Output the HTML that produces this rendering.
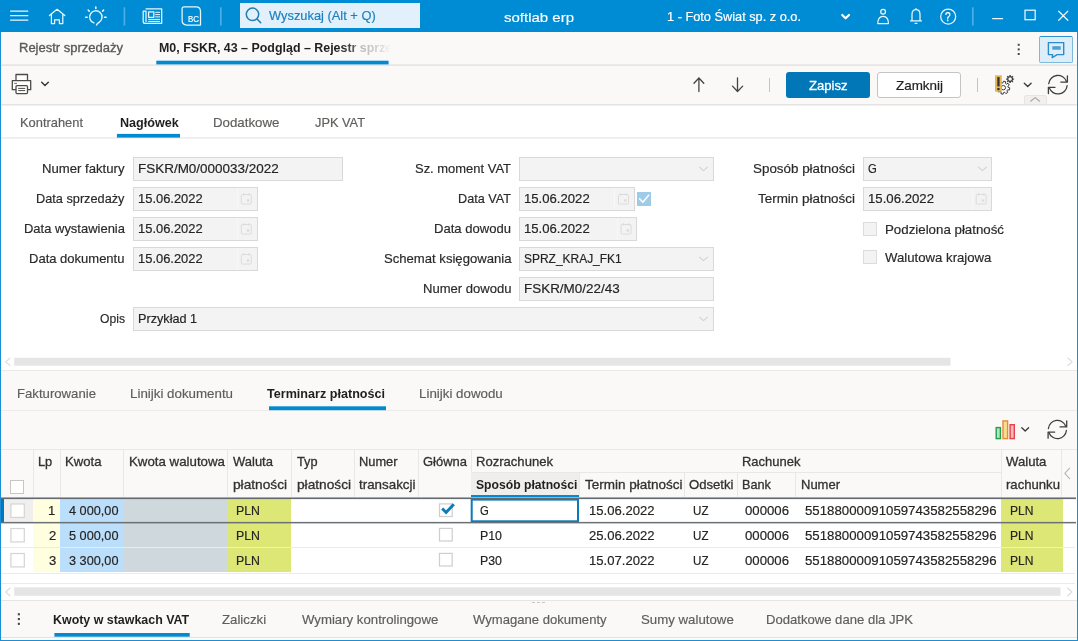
<!doctype html>
<html lang="pl"><head><meta charset="utf-8"><title>softlab erp – M0, FSKR, 43 – Podgląd – Rejestr sprzedaży</title>
<style>
html,body{margin:0;padding:0}
body{width:1078px;height:641px;overflow:hidden;position:relative;background:#faf9f8;font-family:"Liberation Sans", Arial, sans-serif;font-size:13px;color:#2b2a29}
#app div{position:absolute}
#app{position:absolute;left:0;top:0;width:1078px;height:641px;overflow:hidden}
.t{position:absolute;white-space:pre;line-height:1;transform-origin:0 0;display:block}
.clip{position:absolute;overflow:hidden;top:0;height:641px}
svg.ico{position:absolute;left:0;top:0;pointer-events:none}
</style></head><body><div id="app">
<div class="topbar" style="left:0px;top:0px;width:1078px;height:32px;background:#008cd4;"></div>
<div class="tabrow" style="left:0px;top:32px;width:1078px;height:32px;background:#faf9f8;"></div>
<div class="toolbar" style="left:0px;top:65px;width:1078px;height:39px;background:#faf9f8;"></div>
<div class="form" style="left:0px;top:105px;width:1078px;height:265px;background:#ffffff;"></div>
<div style="left:0px;top:370px;width:1078px;height:1px;background:#eae9e8;"></div>
<div class="tabrow2" style="left:0px;top:371px;width:1078px;height:39px;background:#faf9f8;"></div>
<div style="left:0px;top:410px;width:1078px;height:1px;background:#edecea;"></div>
<div class="gridbar" style="left:0px;top:411px;width:1078px;height:38px;background:#faf9f8;"></div>
<div style="left:0px;top:449px;width:1078px;height:1px;background:#e9e8e7;"></div>
<div class="gridhead" style="left:0px;top:450px;width:1078px;height:48px;background:#faf9f8;"></div>
<div class="gridbody" style="left:0px;top:498px;width:1078px;height:102px;background:#ffffff;"></div>
<div style="left:0px;top:600px;width:1078px;height:1px;background:#e6e5e4;"></div>
<div class="bottomtabs" style="left:0px;top:601px;width:1078px;height:36px;background:#faf9f8;"></div>
<div style="left:0px;top:637px;width:1078px;height:1px;background:#e2e1e0;"></div>
<div style="left:0px;top:638px;width:1078px;height:2px;background:#fdfdfc;"></div>
<div class="search" style="left:240px;top:3px;width:179.5px;height:25px;background:#e1f0fa;"></div>
<div class="chatbtn" style="left:1039px;top:36px;width:33.6px;height:27px;background:#deeef9;box-sizing:border-box;border:1px solid #7db9de;border-top-color:#2b8fcf;border-radius:2px;"></div>
<div class="btn-primary" style="left:786px;top:72px;width:84px;height:26px;background:#0277b8;border-radius:3px;"></div>
<div class="btn" style="left:877px;top:72px;width:84px;height:26px;background:#ffffff;box-sizing:border-box;border:1px solid #c6c4c2;border-radius:3px;"></div>
<div style="left:769px;top:78px;width:1px;height:13.5px;background:#c4c2c0;"></div>
<div style="left:977px;top:78px;width:1px;height:13.5px;background:#c4c2c0;"></div>
<div style="left:1024px;top:95px;width:23px;height:9.5px;background:#f1f0ef;box-sizing:border-box;border:1px solid #e6e5e4;border-bottom:none;border-radius:3px 3px 0 0;"></div>
<div class="field" style="left:133px;top:157px;width:210px;height:24px;background:#f3f3f3;box-sizing:border-box;border:1px solid #d9d9d9;"></div>
<div class="field" style="left:133px;top:187px;width:124.5px;height:24px;background:#f3f3f3;box-sizing:border-box;border:1px solid #d9d9d9;"></div>
<div class="field" style="left:133px;top:217px;width:124.5px;height:24px;background:#f3f3f3;box-sizing:border-box;border:1px solid #d9d9d9;"></div>
<div class="field" style="left:133px;top:247px;width:124.5px;height:24px;background:#f3f3f3;box-sizing:border-box;border:1px solid #d9d9d9;"></div>
<div class="field" style="left:133px;top:307px;width:581px;height:24px;background:#f3f3f3;box-sizing:border-box;border:1px solid #d9d9d9;"></div>
<div class="field" style="left:519px;top:157px;width:195px;height:24px;background:#f3f3f3;box-sizing:border-box;border:1px solid #d9d9d9;"></div>
<div class="field" style="left:519px;top:187px;width:115.5px;height:24px;background:#f3f3f3;box-sizing:border-box;border:1px solid #d9d9d9;"></div>
<div class="field" style="left:519px;top:217px;width:118px;height:24px;background:#f3f3f3;box-sizing:border-box;border:1px solid #d9d9d9;"></div>
<div class="field" style="left:519px;top:247px;width:195px;height:24px;background:#f3f3f3;box-sizing:border-box;border:1px solid #d9d9d9;"></div>
<div class="field" style="left:519px;top:277px;width:195px;height:24px;background:#f3f3f3;box-sizing:border-box;border:1px solid #d9d9d9;"></div>
<div class="chk-on" style="left:637px;top:192px;width:14px;height:14px;background:#9dcbe8;"></div>
<div class="field" style="left:863px;top:157px;width:129px;height:24px;background:#f3f3f3;box-sizing:border-box;border:1px solid #d9d9d9;"></div>
<div class="field" style="left:863px;top:187px;width:129px;height:24px;background:#f3f3f3;box-sizing:border-box;border:1px solid #d9d9d9;"></div>
<div class="chk" style="left:863px;top:222px;width:14px;height:14px;background:#f3f3f3;box-sizing:border-box;border:1px solid #dcdcdc;"></div>
<div class="chk" style="left:863px;top:250px;width:14px;height:14px;background:#f3f3f3;box-sizing:border-box;border:1px solid #dcdcdc;"></div>
<div style="left:237px;top:188px;width:1px;height:22px;background:#f8f8f8;"></div>
<div style="left:237px;top:218px;width:1px;height:22px;background:#f8f8f8;"></div>
<div style="left:237px;top:248px;width:1px;height:22px;background:#f8f8f8;"></div>
<div style="left:614.2px;top:188px;width:1px;height:22px;background:#f8f8f8;"></div>
<div style="left:616.7px;top:218px;width:1px;height:22px;background:#f8f8f8;"></div>
<div style="left:972px;top:188px;width:1px;height:22px;background:#f8f8f8;"></div>
<div style="left:33px;top:450px;width:1px;height:47px;background:#e9e8e7;"></div>
<div style="left:59.5px;top:450px;width:1px;height:47px;background:#e9e8e7;"></div>
<div style="left:122.5px;top:450px;width:1px;height:47px;background:#e9e8e7;"></div>
<div style="left:227px;top:450px;width:1px;height:47px;background:#e9e8e7;"></div>
<div style="left:291px;top:450px;width:1px;height:47px;background:#e9e8e7;"></div>
<div style="left:353.5px;top:450px;width:1px;height:47px;background:#e9e8e7;"></div>
<div style="left:418px;top:450px;width:1px;height:47px;background:#e9e8e7;"></div>
<div style="left:470.5px;top:450px;width:1px;height:47px;background:#e9e8e7;"></div>
<div style="left:1000.5px;top:450px;width:1px;height:47px;background:#e9e8e7;"></div>
<div style="left:1060.5px;top:450px;width:1px;height:47px;background:#e9e8e7;"></div>
<div style="left:579px;top:473px;width:1px;height:24px;background:#e9e8e7;"></div>
<div style="left:683.5px;top:473px;width:1px;height:24px;background:#e9e8e7;"></div>
<div style="left:736.5px;top:473px;width:1px;height:24px;background:#e9e8e7;"></div>
<div style="left:795px;top:473px;width:1px;height:24px;background:#e9e8e7;"></div>
<div style="left:471px;top:472px;width:529.5px;height:1px;background:#e9e8e7;"></div>
<div style="left:471px;top:473px;width:108px;height:24px;background:#efeeed;"></div>
<div style="left:471px;top:494.5px;width:108px;height:2.5px;background:#008cd4;"></div>
<div class="chk" style="left:10px;top:480px;width:14px;height:14px;background:#ffffff;box-sizing:border-box;border:1px solid #c8c6c4;"></div>
<div style="left:4px;top:499px;width:29px;height:23px;background:#f0efee;"></div>
<div style="left:33px;top:499px;width:26.5px;height:23px;background:#ffffe0;"></div>
<div style="left:59.5px;top:499px;width:63px;height:23px;background:#bbdefb;"></div>
<div style="left:122.5px;top:499px;width:104.5px;height:23px;background:#cfd8dc;"></div>
<div style="left:227px;top:499px;width:63.5px;height:23px;background:#dce775;"></div>
<div style="left:1001px;top:499px;width:61.5px;height:23px;background:#dce775;"></div>
<div style="left:33px;top:523px;width:26.5px;height:24px;background:#ffffe0;"></div>
<div style="left:59.5px;top:523px;width:63px;height:24px;background:#bbdefb;"></div>
<div style="left:122.5px;top:523px;width:104.5px;height:24px;background:#cfd8dc;"></div>
<div style="left:227px;top:523px;width:63.5px;height:24px;background:#dce775;"></div>
<div style="left:1001px;top:523px;width:61.5px;height:24px;background:#dce775;"></div>
<div style="left:33px;top:548px;width:26.5px;height:24px;background:#ffffe0;"></div>
<div style="left:59.5px;top:548px;width:63px;height:24px;background:#bbdefb;"></div>
<div style="left:122.5px;top:548px;width:104.5px;height:24px;background:#cfd8dc;"></div>
<div style="left:227px;top:548px;width:63.5px;height:24px;background:#dce775;"></div>
<div style="left:1001px;top:548px;width:61.5px;height:24px;background:#dce775;"></div>
<div style="left:1px;top:547px;width:1074px;height:1px;background:#ecebea;"></div>
<div style="left:1px;top:573px;width:1074px;height:1px;background:#ecebea;"></div>
<div style="left:1px;top:583px;width:1074px;height:1px;background:#ecebea;"></div>
<div style="left:1px;top:499px;width:3px;height:23px;background:#0277bd;"></div>
<div style="left:532px;top:602px;width:3.4px;height:1px;background:#c9c8c7;"></div>
<div style="left:537px;top:602px;width:3.4px;height:1px;background:#c9c8c7;"></div>
<div style="left:542px;top:602px;width:3.4px;height:1px;background:#c9c8c7;"></div>
<div style="left:0px;top:32px;width:1.2px;height:609px;background:#1b8fd6;"></div>
<div style="left:1076.7px;top:32px;width:1.3px;height:609px;background:#1b8fd6;"></div>
<div style="left:0px;top:640px;width:1078px;height:1px;background:#1b8fd6;"></div>
<svg class="ico" width="1078" height="641" viewBox="0 0 1078 641"><rect x="1.2" y="64.3" width="1075.5" height="1.6" fill="#e5e4e3"/>
<rect x="1.2" y="104" width="1075.5" height="1.6" fill="#e5e4e3"/>
<rect x="1.2" y="137.1" width="1075.5" height="1.6" fill="#eeedec"/>
<rect x="156.3" y="60.7" width="232.3" height="3.7" fill="#0289d2"/>
<rect x="116.9" y="133.9" width="63.1" height="3.7" fill="#0289d2"/>
<rect x="14.2" y="357.8" width="936.3" height="7.9" fill="#e5e5e5"/>
<rect x="269" y="406.3" width="117" height="3.9" fill="#0289d2"/>
<rect x="10.9" y="504.0" width="13.4" height="13.4" fill="#fff" stroke="#d5d4d3" stroke-width="1.2"/>
<rect x="439.5" y="503.9" width="12.7" height="12.6" fill="#fff" stroke="#cfcecd" stroke-width="1.2"/>
<rect x="10.9" y="528.5" width="13.4" height="13.4" fill="#fff" stroke="#d5d4d3" stroke-width="1.2"/>
<rect x="439.5" y="528.4" width="12.7" height="12.6" fill="#fff" stroke="#cfcecd" stroke-width="1.2"/>
<rect x="10.9" y="553.5" width="13.4" height="13.4" fill="#fff" stroke="#d5d4d3" stroke-width="1.2"/>
<rect x="439.5" y="553.4" width="12.7" height="12.6" fill="#fff" stroke="#cfcecd" stroke-width="1.2"/>
<rect x="471.7" y="499.6" width="106.3" height="21.7" fill="none" stroke="#0b7bb9" stroke-width="2"/>
<rect x="1" y="497.1" width="1075" height="0.9" fill="#a8aaab"/><rect x="1" y="497.9" width="1075" height="1.2" fill="#646b70"/><rect x="1" y="521.9" width="1075" height="1.5" fill="#6b7074"/>
<rect x="14.2" y="587.4" width="1046.3" height="8.4" fill="#e5e5e5"/>
<rect x="54.4" y="633" width="135.3" height="3.7" fill="#0289d2"/>
<g stroke="#fff" fill="none" stroke-linecap="round" stroke-linejoin="round" stroke-width="1.25" opacity=".92"><path d="M10.6 11.2H27.8M10.6 15.7H27.8M10.6 20.2H27.8"/><path d="M49.4 15.6L57.1 9.3L64.8 15.6M51.4 14.2V23.5H54.6V19.8H59.4V23.5H62.8V14.2"/><path d="M93.9 22.9A6.2 6.2 0 1 1 99.4 22.1Q97.1 23.4 96.5 25.1" stroke-width="1.4"/><path d="M95.8 7V8.5M88.2 10L89.2 11.2M103.6 10L102.6 11.2M85.7 17.3H87.2M104.6 17.3H106.1" stroke-width="1.6"/><path d="M146 8.8H161.7V23.4H145.2Q143.2 23.4 143.2 21.4V11.2H146V21.6"/><rect x="148.6" y="11.9" width="5.2" height="5.4"/><path d="M155.6 12.3H159.6M155.6 14.6H159.6M155.6 16.9H159.6M148.6 19.4H159.6M148.6 21.4H159.6" stroke-width="1"/><path d="M184 6.9H196Q200.5 6.9 200.5 11.4V25H186.8Q182.1 25 182.1 20.3V8.8Q182.1 6.9 184 6.9Z"/><circle cx="883.1" cy="11.7" r="2.4"/><path d="M877.8 23.5Q877.8 16.3 883.1 16.3Q888.4 16.3 888.4 23.5Z"/><path d="M910.6 20.9H921.4M912 20.9V14.4Q912 9.7 916 9.7Q920 9.7 920 14.4V20.9M915.1 23.4H916.9M916 8.6V9.6"/><circle cx="948.2" cy="16.6" r="7.5"/><path d="M992.6 18.5H1002.6M1058.7 11.2L1067.8 20.3M1067.8 11.2L1058.7 20.3"/><rect x="1025" y="10.2" width="10.2" height="9.5" stroke-linejoin="miter"/></g>
<path d="M124.4 7.3V25.5M220.8 7.3V25.5M972.8 7.3V25.5" stroke="#fff" stroke-opacity=".3" stroke-width="1.7" fill="none"/>
<path d="M842.2 14.9L845.6 18.3L849 14.9" stroke="#fff" stroke-width="2.1" fill="none" stroke-linecap="round" stroke-linejoin="round"/>
<g stroke="#1f7db5" stroke-width="1.5" fill="none" stroke-linecap="round"><circle cx="252.5" cy="14.3" r="6.2"/><path d="M257.1 19L260.7 22.8"/></g>
<g fill="#4a4948"><rect x="1017.7" y="43.8" width="2" height="2"/><rect x="1017.7" y="48.4" width="2" height="2"/><rect x="1017.7" y="53" width="2" height="2"/><rect x="17.8" y="613.2" width="2.1" height="2.1"/><rect x="17.8" y="618" width="2.1" height="2.1"/><rect x="17.8" y="622.8" width="2.1" height="2.1"/></g>
<g stroke="#2b8cc9" stroke-width="1.4" fill="none" stroke-linejoin="round"><path d="M1048.4 42.6H1063.7V54.6H1057.2L1052.2 57.6L1052.6 54.6H1048.4Z"/></g><rect x="1052.3" y="46.2" width="8.4" height="3.5" fill="#4b9fd6"/>
<g stroke="#4c4b4a" stroke-width="1.3" fill="#fff" stroke-linejoin="round"><rect x="16" y="74.5" width="11.5" height="6.2"/><rect x="12.3" y="80.7" width="18.4" height="9"/><rect x="16" y="85.6" width="11.5" height="8" rx="1"/><path d="M18.2 88.4H25.2M18.2 90.6H25.2" stroke-width="1"/></g><rect x="14.2" y="82.9" width="2.8" height="1.1" fill="#2b8fd6"/>
<g stroke="#3b3a39" stroke-width="1.5" fill="none" stroke-linecap="round" stroke-linejoin="round"><path d="M41.7 82.3L45 85.5L48.3 82.3"/><path d="M1024.3 83.2L1027.7 86.4L1031.1 83.2" stroke-width="1.4"/><path d="M1021.8 427.8L1025.2 431L1028.6 427.8" stroke-width="1.35"/></g>
<g stroke="#454443" stroke-width="1.3" fill="none" stroke-linecap="round" stroke-linejoin="round"><path d="M698.9 91.6V78M694 83.3L698.9 78L703.8 83.3"/><path d="M737.5 77.8V91.5M732.5 86.1L737.5 91.5L742.7 86.1"/></g>
<g stroke="#3f3e3d" stroke-width="1" fill="none" stroke-linejoin="round"><path d="M1008.09 87.36L1009.80 87.88L1009.35 90.07L1007.58 89.87L1006.92 90.85L1007.77 92.42L1005.91 93.65L1004.79 92.26L1003.64 92.49L1003.12 94.20L1000.93 93.75L1001.13 91.98L1000.15 91.32L998.58 92.17L997.35 90.31L998.74 89.19L998.51 88.04L996.80 87.52L997.25 85.33L999.02 85.53L999.68 84.55L998.83 82.98L1000.69 81.75L1001.81 83.14L1002.96 82.91L1003.48 81.20L1005.67 81.65L1005.47 83.42L1006.45 84.08L1008.02 83.23L1009.25 85.09L1007.86 86.21Z"/><circle cx="1003.3" cy="87.7" r="2.2"/><circle cx="1010.1" cy="79.1" r="2.4" stroke-width="1.3"/><path d="M1013.10 79.10L1014.10 79.10M1012.22 81.22L1012.93 81.93M1010.10 82.10L1010.10 83.10M1007.98 81.22L1007.27 81.93M1007.10 79.10L1006.10 79.10M1007.98 76.98L1007.27 76.27M1010.10 76.10L1010.10 75.10M1012.22 76.98L1012.93 76.27" stroke-width="1.45"/></g>
<rect x="995" y="75.3" width="6.8" height="16.4" fill="#e3b758"/><rect x="997.3" y="77.1" width="2.3" height="9.3" fill="#353433"/><rect x="997.3" y="88" width="2.3" height="2.2" fill="#353433"/>
<g stroke="#3f3e3d" stroke-width="1.3" fill="none" stroke-linecap="round" stroke-linejoin="round"><path d="M1048.70 83.70A9.2 9.2 0 0 1 1066.50 81.50"/><path d="M1067.40 75.80V82.10H1060.80"/><path d="M1067.10 85.70A9.2 9.2 0 0 1 1049.30 87.90"/><path d="M1048.40 93.60V87.30H1055.00"/></g>
<g stroke="#3f3e3d" stroke-width="1.3" fill="none" stroke-linecap="round" stroke-linejoin="round"><path d="M1048.40 428.50A9.0 9.0 0 0 1 1065.80 426.30"/><path d="M1066.70 420.80V426.90H1060.10"/><path d="M1066.40 430.50A9.0 9.0 0 0 1 1049.00 432.70"/><path d="M1048.10 438.20V432.10H1054.70"/></g>
<path d="M1030.6 101.2L1035.1 97.6L1039.6 101.2" stroke="#a9a8a7" stroke-width="1.2" fill="none" stroke-linecap="round" stroke-linejoin="round"/>
<g stroke="#dcdcdc" stroke-width="1" fill="none"><rect x="241.3" y="194.5" width="10" height="9.5" rx="1"/><path d="M243.60000000000002 193V195.6M249.0 193V195.6"/></g><rect x="246.9" y="199.3" width="2.4" height="2.4" fill="#dcdcdc"/>
<g stroke="#dcdcdc" stroke-width="1" fill="none"><rect x="241.3" y="224.5" width="10" height="9.5" rx="1"/><path d="M243.60000000000002 223V225.6M249.0 223V225.6"/></g><rect x="246.9" y="229.3" width="2.4" height="2.4" fill="#dcdcdc"/>
<g stroke="#dcdcdc" stroke-width="1" fill="none"><rect x="241.3" y="254.5" width="10" height="9.5" rx="1"/><path d="M243.60000000000002 253V255.6M249.0 253V255.6"/></g><rect x="246.9" y="259.3" width="2.4" height="2.4" fill="#dcdcdc"/>
<g stroke="#dcdcdc" stroke-width="1" fill="none"><rect x="618.5" y="194.5" width="10" height="9.5" rx="1"/><path d="M620.8 193V195.6M626.2 193V195.6"/></g><rect x="624.1" y="199.3" width="2.4" height="2.4" fill="#dcdcdc"/>
<g stroke="#dcdcdc" stroke-width="1" fill="none"><rect x="621" y="224.5" width="10" height="9.5" rx="1"/><path d="M623.3 223V225.6M628.7 223V225.6"/></g><rect x="626.6" y="229.3" width="2.4" height="2.4" fill="#dcdcdc"/>
<g stroke="#dcdcdc" stroke-width="1" fill="none"><rect x="976.2" y="194.5" width="10" height="9.5" rx="1"/><path d="M978.5 193V195.6M983.9000000000001 193V195.6"/></g><rect x="981.8000000000001" y="199.3" width="2.4" height="2.4" fill="#dcdcdc"/>
<path d="M699.5 167.2L703.5 170.6L707.5 167.2" stroke="#d2d2d2" stroke-width="1.1" fill="none" stroke-linecap="round" stroke-linejoin="round"/>
<path d="M699.5 257.2L703.5 260.59999999999997L707.5 257.2" stroke="#d2d2d2" stroke-width="1.1" fill="none" stroke-linecap="round" stroke-linejoin="round"/>
<path d="M699.5 317.2L703.5 320.59999999999997L707.5 317.2" stroke="#d2d2d2" stroke-width="1.1" fill="none" stroke-linecap="round" stroke-linejoin="round"/>
<path d="M978.4 167.2L982.4 170.6L986.4 167.2" stroke="#d2d2d2" stroke-width="1.1" fill="none" stroke-linecap="round" stroke-linejoin="round"/>
<path d="M639.6 198.8L642.9 202.3L648.6 195.2" stroke="#fff" stroke-width="1.5" fill="none" stroke-linecap="round" stroke-linejoin="round"/>
<path d="M442.2 508.5L446.1 512.5L453.8 504.2" stroke="#0b7bb9" stroke-width="2.9" fill="none" stroke-linecap="butt" stroke-linejoin="miter"/>
<g stroke="#dddcdb" stroke-width="1.1" fill="none" stroke-linecap="round" stroke-linejoin="round"><path d="M10 358L5.8 361.8L10 365.5"/><path d="M1067.8 358L1072.2 361.8L1067.8 365.5"/><path d="M10 588L5.8 592L10 596"/><path d="M1067.6 588L1072 592L1067.6 596"/></g>
<path d="M1069.6 468.2L1064.8 473.4L1069.6 478.6" stroke="#b5b4b3" stroke-width="1.1" fill="none" stroke-linecap="round" stroke-linejoin="round"/>
<g stroke-width="1.4"><rect x="996.2" y="427.6" width="4.2" height="11" fill="#b9e2c2" stroke="#1fa04a"/><rect x="1003" y="420.9" width="4.6" height="17.7" fill="#f9dc8f" stroke="#e98a38"/><rect x="1010.1" y="424.7" width="4.2" height="13.9" fill="#f7b9bd" stroke="#e2444a"/></g></svg>
<span class="t" style="left:268.75px;top:8.80px;font-size:13px;color:#1b7fc0;-webkit-text-stroke:0.18px #1b7fc0;transform:scaleX(0.9893);">Wyszukaj (Alt + Q)</span>
<span class="t" style="left:503.75px;top:10.80px;font-size:13.5px;color:#ffffff;-webkit-text-stroke:0.15px #ffffff;transform:scaleX(1.1102);">softlab erp</span>
<span class="t" style="left:667.00px;top:10.30px;font-size:13px;color:#ffffff;-webkit-text-stroke:0.2px #ffffff;transform:scaleX(0.9812);">1 - Foto Świat sp. z o.o.</span>
<span class="t" style="left:187.60px;top:14.50px;font-size:8.5px;color:#ffffff;-webkit-text-stroke:0.18px #ffffff;transform:scaleX(0.9307);">BC</span>
<span class="t" style="left:945.40px;top:10.80px;font-size:12px;color:#ffffff;-webkit-text-stroke:0.25px #ffffff;transform:scaleX(0.8392);">?</span>
<span class="t" style="left:19.00px;top:41.40px;font-size:13px;color:#5a5958;-webkit-text-stroke:0.35px #5a5958;transform:scaleX(0.9993);">Rejestr sprzedaży</span>
<div class="clip" style="left:158.60px;width:233px;-webkit-mask-image:linear-gradient(to right,#000 182px,rgba(0,0,0,.72) 195px,rgba(0,0,0,.3) 202px,rgba(0,0,0,.16) 221px,transparent 232px);mask-image:linear-gradient(to right,#000 182px,rgba(0,0,0,.72) 195px,rgba(0,0,0,.3) 202px,rgba(0,0,0,.16) 221px,transparent 232px)"><span class="t" style="left:0;top:41.40px;font-size:13px;color:#201f1e;font-weight:700;transform:scaleX(0.9553);">M0, FSKR, 43 – Podgląd – Rejestr sprzedaży</span></div>
<span class="t" style="left:808.50px;top:78.50px;font-size:13px;color:#ffffff;-webkit-text-stroke:0.3px #ffffff;transform:scaleX(1.0054);">Zapisz</span>
<span class="t" style="left:895.50px;top:78.50px;font-size:13px;color:#201f1e;-webkit-text-stroke:0.2px #201f1e;transform:scaleX(1.0328);">Zamknij</span>
<span class="t" style="left:20.00px;top:115.50px;font-size:13px;color:#5f5e5c;-webkit-text-stroke:0.18px #5f5e5c;transform:scaleX(0.9900);">Kontrahent</span>
<span class="t" style="left:119.50px;top:115.60px;font-size:13px;color:#201f1e;font-weight:700;transform:scaleX(0.9685);">Nagłówek</span>
<span class="t" style="left:213.00px;top:115.50px;font-size:13px;color:#5f5e5c;-webkit-text-stroke:0.18px #5f5e5c;transform:scaleX(1.0219);">Dodatkowe</span>
<span class="t" style="left:314.50px;top:115.50px;font-size:13px;color:#5f5e5c;-webkit-text-stroke:0.18px #5f5e5c;transform:scaleX(0.9836);">JPK VAT</span>
<span class="t" style="left:42.00px;top:162.10px;font-size:13px;color:#2b2a29;-webkit-text-stroke:0.18px #2b2a29;transform:scaleX(1.0104);">Numer faktury</span>
<span class="t" style="left:138.30px;top:162.20px;font-size:13px;color:#252423;-webkit-text-stroke:0.18px #252423;transform:scaleX(1.0357);">FSKR/M0/000033/2022</span>
<span class="t" style="left:36.00px;top:192.10px;font-size:13px;color:#2b2a29;-webkit-text-stroke:0.18px #2b2a29;transform:scaleX(0.9795);">Data sprzedaży</span>
<span class="t" style="left:138.30px;top:192.20px;font-size:13px;color:#252423;-webkit-text-stroke:0.18px #252423;transform:scaleX(0.9942);">15.06.2022</span>
<span class="t" style="left:23.50px;top:222.10px;font-size:13px;color:#2b2a29;-webkit-text-stroke:0.18px #2b2a29;transform:scaleX(0.9980);">Data wystawienia</span>
<span class="t" style="left:138.30px;top:222.20px;font-size:13px;color:#252423;-webkit-text-stroke:0.18px #252423;transform:scaleX(0.9942);">15.06.2022</span>
<span class="t" style="left:29.00px;top:252.10px;font-size:13px;color:#2b2a29;-webkit-text-stroke:0.18px #2b2a29;transform:scaleX(1.0007);">Data dokumentu</span>
<span class="t" style="left:138.30px;top:252.20px;font-size:13px;color:#252423;-webkit-text-stroke:0.18px #252423;transform:scaleX(0.9942);">15.06.2022</span>
<span class="t" style="left:99.50px;top:312.10px;font-size:13px;color:#2b2a29;-webkit-text-stroke:0.18px #2b2a29;transform:scaleX(0.9357);">Opis</span>
<span class="t" style="left:138.30px;top:312.20px;font-size:13px;color:#252423;-webkit-text-stroke:0.18px #252423;transform:scaleX(0.9749);">Przykład 1</span>
<span class="t" style="left:415.00px;top:162.10px;font-size:13px;color:#2b2a29;-webkit-text-stroke:0.18px #2b2a29;transform:scaleX(0.9965);">Sz. moment VAT</span>
<span class="t" style="left:458.00px;top:192.10px;font-size:13px;color:#2b2a29;-webkit-text-stroke:0.18px #2b2a29;transform:scaleX(0.9740);">Data VAT</span>
<span class="t" style="left:524.30px;top:192.20px;font-size:13px;color:#252423;-webkit-text-stroke:0.18px #252423;transform:scaleX(1.0096);">15.06.2022</span>
<span class="t" style="left:434.00px;top:222.10px;font-size:13px;color:#2b2a29;-webkit-text-stroke:0.18px #2b2a29;transform:scaleX(1.0046);">Data dowodu</span>
<span class="t" style="left:524.30px;top:222.20px;font-size:13px;color:#252423;-webkit-text-stroke:0.18px #252423;transform:scaleX(1.0096);">15.06.2022</span>
<span class="t" style="left:383.50px;top:252.10px;font-size:13px;color:#2b2a29;-webkit-text-stroke:0.18px #2b2a29;transform:scaleX(1.0079);">Schemat księgowania</span>
<span class="t" style="left:524.30px;top:252.20px;font-size:13px;color:#252423;-webkit-text-stroke:0.18px #252423;transform:scaleX(0.9199);">SPRZ_KRAJ_FK1</span>
<span class="t" style="left:422.50px;top:282.10px;font-size:13px;color:#2b2a29;-webkit-text-stroke:0.18px #2b2a29;transform:scaleX(1.0041);">Numer dowodu</span>
<span class="t" style="left:524.30px;top:282.20px;font-size:13px;color:#252423;-webkit-text-stroke:0.18px #252423;transform:scaleX(1.0345);">FSKR/M0/22/43</span>
<span class="t" style="left:753.00px;top:162.10px;font-size:13px;color:#2b2a29;-webkit-text-stroke:0.18px #2b2a29;transform:scaleX(1.0303);">Sposób płatności</span>
<span class="t" style="left:867.50px;top:162.20px;font-size:13px;color:#252423;-webkit-text-stroke:0.18px #252423;transform:scaleX(0.8667);">G</span>
<span class="t" style="left:758.00px;top:192.10px;font-size:13px;color:#2b2a29;-webkit-text-stroke:0.18px #2b2a29;transform:scaleX(1.0326);">Termin płatności</span>
<span class="t" style="left:867.50px;top:192.20px;font-size:13px;color:#252423;-webkit-text-stroke:0.18px #252423;transform:scaleX(1.0142);">15.06.2022</span>
<span class="t" style="left:884.50px;top:222.60px;font-size:13px;color:#2b2a29;-webkit-text-stroke:0.18px #2b2a29;transform:scaleX(1.0228);">Podzielona płatność</span>
<span class="t" style="left:884.50px;top:250.60px;font-size:13px;color:#2b2a29;-webkit-text-stroke:0.18px #2b2a29;transform:scaleX(1.0138);">Walutowa krajowa</span>
<span class="t" style="left:17.00px;top:386.50px;font-size:13px;color:#5f5e5c;-webkit-text-stroke:0.18px #5f5e5c;transform:scaleX(1.0119);">Fakturowanie</span>
<span class="t" style="left:130.00px;top:386.50px;font-size:13px;color:#5f5e5c;-webkit-text-stroke:0.18px #5f5e5c;transform:scaleX(1.0256);">Linijki dokumentu</span>
<span class="t" style="left:267.20px;top:386.70px;font-size:13px;color:#201f1e;font-weight:700;transform:scaleX(0.9690);">Terminarz płatności</span>
<span class="t" style="left:418.75px;top:386.50px;font-size:13px;color:#5f5e5c;-webkit-text-stroke:0.18px #5f5e5c;transform:scaleX(1.0258);">Linijki dowodu</span>
<span class="t" style="left:38.30px;top:454.60px;font-size:13px;color:#323130;-webkit-text-stroke:0.3px #323130;transform:scaleX(0.9835);">Lp</span>
<span class="t" style="left:64.50px;top:454.60px;font-size:13px;color:#323130;-webkit-text-stroke:0.3px #323130;transform:scaleX(1.0079);">Kwota</span>
<span class="t" style="left:128.50px;top:454.60px;font-size:13px;color:#323130;-webkit-text-stroke:0.3px #323130;transform:scaleX(1.0213);">Kwota walutowa</span>
<span class="t" style="left:233.00px;top:454.60px;font-size:13px;color:#323130;-webkit-text-stroke:0.3px #323130;transform:scaleX(0.9988);">Waluta</span>
<span class="t" style="left:233.00px;top:477.80px;font-size:13px;color:#323130;-webkit-text-stroke:0.3px #323130;transform:scaleX(1.0529);">płatności</span>
<span class="t" style="left:296.50px;top:454.60px;font-size:13px;color:#323130;-webkit-text-stroke:0.3px #323130;transform:scaleX(0.9788);">Typ</span>
<span class="t" style="left:296.50px;top:477.80px;font-size:13px;color:#323130;-webkit-text-stroke:0.3px #323130;transform:scaleX(1.0529);">płatności</span>
<span class="t" style="left:359.00px;top:454.60px;font-size:13px;color:#323130;-webkit-text-stroke:0.3px #323130;transform:scaleX(0.9870);">Numer</span>
<span class="t" style="left:359.00px;top:477.80px;font-size:13px;color:#323130;-webkit-text-stroke:0.3px #323130;transform:scaleX(1.0284);">transakcji</span>
<span class="t" style="left:423.00px;top:454.60px;font-size:13px;color:#323130;-webkit-text-stroke:0.3px #323130;transform:scaleX(0.9970);">Główna</span>
<span class="t" style="left:475.50px;top:454.60px;font-size:13px;color:#323130;-webkit-text-stroke:0.3px #323130;transform:scaleX(1.0046);">Rozrachunek</span>
<span class="t" style="left:475.50px;top:477.80px;font-size:13px;color:#201f1e;font-weight:700;transform:scaleX(0.9367);">Sposób płatności</span>
<span class="t" style="left:584.50px;top:477.80px;font-size:13px;color:#323130;-webkit-text-stroke:0.3px #323130;transform:scaleX(1.0380);">Termin płatności</span>
<span class="t" style="left:689.00px;top:477.80px;font-size:13px;color:#323130;-webkit-text-stroke:0.3px #323130;transform:scaleX(1.0096);">Odsetki</span>
<span class="t" style="left:742.00px;top:454.60px;font-size:13px;color:#323130;-webkit-text-stroke:0.3px #323130;transform:scaleX(0.9977);">Rachunek</span>
<span class="t" style="left:742.00px;top:477.80px;font-size:13px;color:#323130;-webkit-text-stroke:0.3px #323130;transform:scaleX(0.9760);">Bank</span>
<span class="t" style="left:800.50px;top:477.80px;font-size:13px;color:#323130;-webkit-text-stroke:0.3px #323130;transform:scaleX(0.9998);">Numer</span>
<span class="t" style="left:1005.50px;top:454.60px;font-size:13px;color:#323130;-webkit-text-stroke:0.3px #323130;transform:scaleX(1.0113);">Waluta</span>
<span class="t" style="left:1005.50px;top:477.80px;font-size:13px;color:#323130;-webkit-text-stroke:0.3px #323130;transform:scaleX(1.0094);">rachunku</span>
<span class="t" style="left:47.50px;top:503.50px;font-size:13px;color:#252423;-webkit-text-stroke:0.18px #252423;transform:scaleX(1.0091);">1</span>
<span class="t" style="left:68.50px;top:503.50px;font-size:13px;color:#252423;-webkit-text-stroke:0.18px #252423;transform:scaleX(0.9775);">4 000,00</span>
<span class="t" style="left:236.00px;top:503.50px;font-size:13px;color:#252423;-webkit-text-stroke:0.18px #252423;transform:scaleX(0.9489);">PLN</span>
<span class="t" style="left:479.50px;top:503.50px;font-size:13px;color:#252423;-webkit-text-stroke:0.18px #252423;transform:scaleX(0.8667);">G</span>
<span class="t" style="left:588.50px;top:503.50px;font-size:13px;color:#252423;-webkit-text-stroke:0.18px #252423;transform:scaleX(1.0065);">15.06.2022</span>
<span class="t" style="left:693.00px;top:503.50px;font-size:13px;color:#252423;-webkit-text-stroke:0.18px #252423;transform:scaleX(0.8924);">UZ</span>
<span class="t" style="left:745.00px;top:503.50px;font-size:13px;color:#252423;-webkit-text-stroke:0.18px #252423;transform:scaleX(1.0147);">000006</span>
<span class="t" style="left:804.50px;top:503.50px;font-size:13px;color:#252423;-webkit-text-stroke:0.18px #252423;transform:scaleX(1.0187);">55188000091059743582558296</span>
<span class="t" style="left:1010.00px;top:503.50px;font-size:13px;color:#252423;-webkit-text-stroke:0.18px #252423;transform:scaleX(0.9292);">PLN</span>
<span class="t" style="left:48.50px;top:528.60px;font-size:13px;color:#252423;-webkit-text-stroke:0.18px #252423;transform:scaleX(1.0091);">2</span>
<span class="t" style="left:68.50px;top:528.60px;font-size:13px;color:#252423;-webkit-text-stroke:0.18px #252423;transform:scaleX(0.9775);">5 000,00</span>
<span class="t" style="left:236.00px;top:528.60px;font-size:13px;color:#252423;-webkit-text-stroke:0.18px #252423;transform:scaleX(0.9489);">PLN</span>
<span class="t" style="left:479.50px;top:528.60px;font-size:13px;color:#252423;-webkit-text-stroke:0.18px #252423;transform:scaleX(0.9504);">P10</span>
<span class="t" style="left:588.50px;top:528.60px;font-size:13px;color:#252423;-webkit-text-stroke:0.18px #252423;transform:scaleX(1.0065);">25.06.2022</span>
<span class="t" style="left:693.00px;top:528.60px;font-size:13px;color:#252423;-webkit-text-stroke:0.18px #252423;transform:scaleX(0.8924);">UZ</span>
<span class="t" style="left:745.00px;top:528.60px;font-size:13px;color:#252423;-webkit-text-stroke:0.18px #252423;transform:scaleX(1.0147);">000006</span>
<span class="t" style="left:804.50px;top:528.60px;font-size:13px;color:#252423;-webkit-text-stroke:0.18px #252423;transform:scaleX(1.0187);">55188000091059743582558296</span>
<span class="t" style="left:1010.00px;top:528.60px;font-size:13px;color:#252423;-webkit-text-stroke:0.18px #252423;transform:scaleX(0.9292);">PLN</span>
<span class="t" style="left:48.50px;top:554.00px;font-size:13px;color:#252423;-webkit-text-stroke:0.18px #252423;transform:scaleX(1.0091);">3</span>
<span class="t" style="left:68.50px;top:554.00px;font-size:13px;color:#252423;-webkit-text-stroke:0.18px #252423;transform:scaleX(0.9775);">3 300,00</span>
<span class="t" style="left:236.00px;top:554.00px;font-size:13px;color:#252423;-webkit-text-stroke:0.18px #252423;transform:scaleX(0.9489);">PLN</span>
<span class="t" style="left:479.50px;top:554.00px;font-size:13px;color:#252423;-webkit-text-stroke:0.18px #252423;transform:scaleX(0.9504);">P30</span>
<span class="t" style="left:588.50px;top:554.00px;font-size:13px;color:#252423;-webkit-text-stroke:0.18px #252423;transform:scaleX(1.0065);">15.07.2022</span>
<span class="t" style="left:693.00px;top:554.00px;font-size:13px;color:#252423;-webkit-text-stroke:0.18px #252423;transform:scaleX(0.8924);">UZ</span>
<span class="t" style="left:745.00px;top:554.00px;font-size:13px;color:#252423;-webkit-text-stroke:0.18px #252423;transform:scaleX(1.0147);">000006</span>
<span class="t" style="left:804.50px;top:554.00px;font-size:13px;color:#252423;-webkit-text-stroke:0.18px #252423;transform:scaleX(1.0187);">55188000091059743582558296</span>
<span class="t" style="left:1010.00px;top:554.00px;font-size:13px;color:#252423;-webkit-text-stroke:0.18px #252423;transform:scaleX(0.9292);">PLN</span>
<span class="t" style="left:52.80px;top:613.00px;font-size:13px;color:#201f1e;font-weight:700;transform:scaleX(0.9554);">Kwoty w stawkach VAT</span>
<span class="t" style="left:222.40px;top:613.00px;font-size:13px;color:#5f5e5c;-webkit-text-stroke:0.18px #5f5e5c;transform:scaleX(1.0170);">Zaliczki</span>
<span class="t" style="left:302.00px;top:613.00px;font-size:13px;color:#5f5e5c;-webkit-text-stroke:0.18px #5f5e5c;transform:scaleX(1.0150);">Wymiary kontrolingowe</span>
<span class="t" style="left:473.00px;top:613.00px;font-size:13px;color:#5f5e5c;-webkit-text-stroke:0.18px #5f5e5c;transform:scaleX(1.0055);">Wymagane dokumenty</span>
<span class="t" style="left:640.70px;top:613.00px;font-size:13px;color:#5f5e5c;-webkit-text-stroke:0.18px #5f5e5c;transform:scaleX(1.0190);">Sumy walutowe</span>
<span class="t" style="left:766.30px;top:613.00px;font-size:13px;color:#5f5e5c;-webkit-text-stroke:0.18px #5f5e5c;transform:scaleX(1.0069);">Dodatkowe dane dla JPK</span>
</div></body></html>
